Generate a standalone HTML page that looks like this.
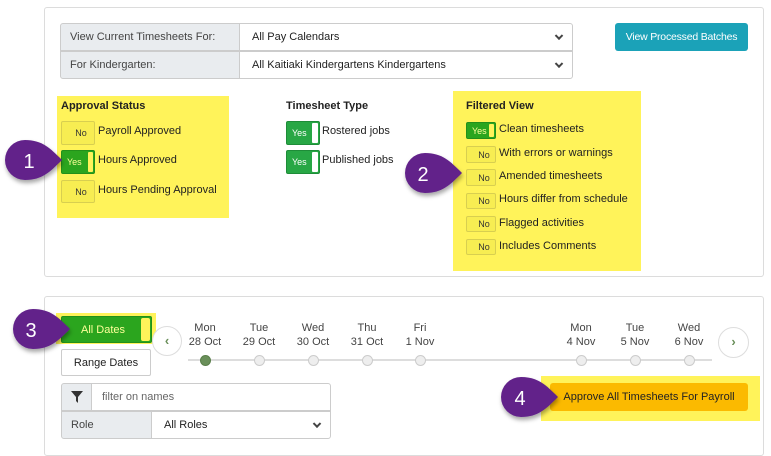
<!DOCTYPE html>
<html><head><style>
*{box-sizing:border-box;margin:0;padding:0}
body{width:771px;height:445px;background:#fff;font-family:"Liberation Sans",sans-serif;font-size:11px;color:#222;position:relative;overflow:hidden}
.a{position:absolute}
.panel{position:absolute;border:1px solid #dcdcdc;border-radius:3px;background:#fff}
.cell{position:absolute;border:1px solid #ccc;font-size:11px;padding-left:9px;display:flex;align-items:center}
.lab{background:#e9ecef;color:#444}
.yl{position:absolute;background:#fff35a}
.tg{position:absolute;border:1px solid #d8cf50;border-radius:2px;background:#f7ed52;font-size:9px;display:flex;align-items:center;justify-content:center;padding-left:6px;color:#333}
.tg.y{background:#2ba51e;border-color:#23901a;color:#ffff9a;padding-left:5px}
.tg.y::after{content:"";position:absolute;right:1px;top:1px;bottom:1px;width:5px;background:#fff35a;border-radius:1px}
.tg.g{background:#28a745;border-color:#1e8c38;color:#fff;padding-left:5px}
.tg.g::after{content:"";position:absolute;right:1px;top:1px;bottom:1px;width:6px;background:#fff;border-radius:1px}
.tx{position:absolute;font-size:11px;color:#222}
.b{font-weight:bold}
.day{position:absolute;width:50px;margin-left:-25px;text-align:center;font-size:11px;color:#444;line-height:14px}
.dot{position:absolute;width:11px;height:11px;margin:-5px 0 0 -5px;border-radius:50%;background:#eee;border:1px solid #ccc}
.chev{position:absolute;right:10px;top:50%;width:6px;height:6px;border-right:2px solid #444;border-bottom:2px solid #444;transform:translateY(-70%) rotate(45deg)}
</style></head><body>
<div class="panel" style="left:44px;top:7px;width:720px;height:270px"></div>
<div class="panel" style="left:44px;top:296px;width:720px;height:160px"></div>

<div class="cell lab" style="left:60px;top:23px;width:180px;height:28px;border-radius:3px 0 0 0">View Current Timesheets For:</div>
<div class="cell" style="left:239px;top:23px;width:334px;height:28px;border-radius:0 3px 0 0;padding-left:12px">All Pay Calendars<span class="chev"></span></div>
<div class="cell lab" style="left:60px;top:51px;width:180px;height:28px;border-radius:0 0 0 3px">For Kindergarten:</div>
<div class="cell" style="left:239px;top:51px;width:334px;height:28px;border-radius:0 0 3px 0;padding-left:12px">All Kaitiaki Kindergartens Kindergartens<span class="chev"></span></div>
<div class="a" style="left:615px;top:23px;width:133px;height:28px;background:#1ba2b8;border-radius:3px;color:#fff;font-size:10.5px;letter-spacing:-0.2px;display:flex;align-items:center;justify-content:center;white-space:nowrap">View Processed Batches</div>

<div class="yl" style="left:57px;top:96px;width:172px;height:122px"></div>
<div class="tx b" style="left:61px;top:100px">Approval Status</div>
<div class="tg" style="left:61px;top:121px;width:34px;height:24px">No</div><div class="tx" style="left:98px;top:125px">Payroll Approved</div>
<div class="tg y" style="left:61px;top:150px;width:34px;height:24px;justify-content:flex-start">Yes</div><div class="tx" style="left:98px;top:154px">Hours Approved</div>
<div class="tg" style="left:61px;top:180px;width:34px;height:23px">No</div><div class="tx" style="left:98px;top:184px">Hours Pending Approval</div>

<div class="tx b" style="left:286px;top:100px">Timesheet Type</div>
<div class="tg g" style="left:286px;top:121px;width:34px;height:24px;justify-content:flex-start">Yes</div><div class="tx" style="left:322px;top:125px">Rostered jobs</div>
<div class="tg g" style="left:286px;top:150px;width:34px;height:24px;justify-content:flex-start">Yes</div><div class="tx" style="left:322px;top:154px">Published jobs</div>

<div class="yl" style="left:453px;top:91px;width:188px;height:180px"></div>
<div class="tx b" style="left:466px;top:100px">Filtered View</div>
<div class="tg y" style="left:466px;top:122px;width:30px;height:17px;justify-content:flex-start">Yes</div><div class="tx" style="left:499px;top:123px">Clean timesheets</div>
<div class="tg" style="left:466px;top:146px;width:30px;height:17px">No</div><div class="tx" style="left:499px;top:147px">With errors or warnings</div>
<div class="tg" style="left:466px;top:169px;width:30px;height:17px">No</div><div class="tx" style="left:499px;top:170px">Amended timesheets</div>
<div class="tg" style="left:466px;top:193px;width:30px;height:16px">No</div><div class="tx" style="left:499px;top:193px">Hours differ from schedule</div>
<div class="tg" style="left:466px;top:216px;width:30px;height:16px">No</div><div class="tx" style="left:499px;top:217px">Flagged activities</div>
<div class="tg" style="left:466px;top:239px;width:30px;height:16px">No</div><div class="tx" style="left:499px;top:240px">Includes Comments</div>

<!-- panel 2 -->
<div class="yl" style="left:56px;top:313px;width:100px;height:31px"></div>
<div class="a" style="left:61px;top:316px;width:91px;height:27px;background:#2ba51e;border:1px solid #23901a;border-radius:2px;color:#ffff9a;font-size:11px;display:flex;align-items:center;padding-left:19px">All Dates</div>
<div class="a" style="left:141px;top:318px;width:9px;height:23px;background:#fff35a;border-radius:2px"></div>
<div class="a" style="left:61px;top:349px;width:90px;height:27px;border:1px solid #ccc;border-radius:2px;font-size:11px;display:flex;align-items:center;justify-content:center">Range Dates</div>

<div class="a" style="left:152px;top:326px;width:30px;height:30px;border:1px solid #ddd;border-radius:50%;background:#fff;color:#6a8f5a;font-weight:bold;font-size:13px;text-align:center;line-height:27px">‹</div>
<div class="a" style="left:718px;top:327px;width:31px;height:31px;border:1px solid #ddd;border-radius:50%;background:#fff;color:#6a8f5a;font-weight:bold;font-size:13px;text-align:center;line-height:28px">›</div>
<div class="a" style="left:188px;top:359px;width:524px;height:2px;background:#ddd"></div>
<div class="day" style="left:205px;top:321px">Mon<br>28 Oct</div>
<div class="day" style="left:259px;top:321px">Tue<br>29 Oct</div>
<div class="day" style="left:313px;top:321px">Wed<br>30 Oct</div>
<div class="day" style="left:367px;top:321px">Thu<br>31 Oct</div>
<div class="day" style="left:420px;top:321px">Fri<br>1 Nov</div>
<div class="day" style="left:581px;top:321px">Mon<br>4 Nov</div>
<div class="day" style="left:635px;top:321px">Tue<br>5 Nov</div>
<div class="day" style="left:689px;top:321px">Wed<br>6 Nov</div>
<div class="dot" style="left:205px;top:360px;background:#6a8f5a;border-color:#5a7f4a"></div>
<div class="dot" style="left:259px;top:360px"></div>
<div class="dot" style="left:313px;top:360px"></div>
<div class="dot" style="left:367px;top:360px"></div>
<div class="dot" style="left:420px;top:360px"></div>
<div class="dot" style="left:581px;top:360px"></div>
<div class="dot" style="left:635px;top:360px"></div>
<div class="dot" style="left:689px;top:360px"></div>

<div class="cell lab" style="left:61px;top:383px;width:31px;height:28px;border-radius:3px 0 0 0;padding:0;justify-content:center"><svg width="12" height="12" viewBox="0 0 12 12"><path d="M0 0H12L7 6V12L5 10V6Z" fill="#333"/></svg></div>
<div class="cell" style="left:91px;top:383px;width:240px;height:28px;border-radius:0 3px 0 0;color:#666;padding-left:10px">filter on names</div>
<div class="cell lab" style="left:61px;top:411px;width:91px;height:28px;border-radius:0 0 0 3px">Role</div>
<div class="cell" style="left:151px;top:411px;width:180px;height:28px;border-radius:0 0 3px 0;padding-left:12px">All Roles<span class="chev"></span></div>

<div class="yl" style="left:541px;top:376px;width:219px;height:45px"></div>
<div class="a" style="left:550px;top:383px;width:198px;height:28px;background:#fbba00;border-radius:3px;font-size:11px;color:#222;display:flex;align-items:center;justify-content:center">Approve All Timesheets For Payroll</div>

<!-- callouts -->
<svg class="a" style="left:0;top:0" width="771" height="445">
<defs><filter id="s" x="-30%" y="-30%" width="160%" height="180%"><feDropShadow dx="1" dy="3" stdDeviation="2" flood-color="#000" flood-opacity="0.35"/></filter></defs>
<g fill="#62238a" filter="url(#s)">
<path d="M62,160 C50,148 42,140 25,140 A20,20 0 0 0 25,180 C42,180 50,172 62,160Z"/>
<path d="M462,173 C450,161 442,153 425,153 A20,20 0 0 0 425,193 C442,193 450,185 462,173Z"/>
<path d="M70,329 C58,317 50,309 33,309 A20,20 0 0 0 33,349 C50,349 58,341 70,329Z"/>
<path d="M558,397 C546,385 538,377 521,377 A20,20 0 0 0 521,417 C538,417 546,409 558,397Z"/>
</g>
<g fill="#fff" font-family="Liberation Sans, sans-serif" font-size="20" text-anchor="middle">
<text x="29" y="168">1</text><text x="423" y="181">2</text><text x="31" y="337">3</text><text x="520" y="405">4</text>
</g>
</svg>
</body></html>
